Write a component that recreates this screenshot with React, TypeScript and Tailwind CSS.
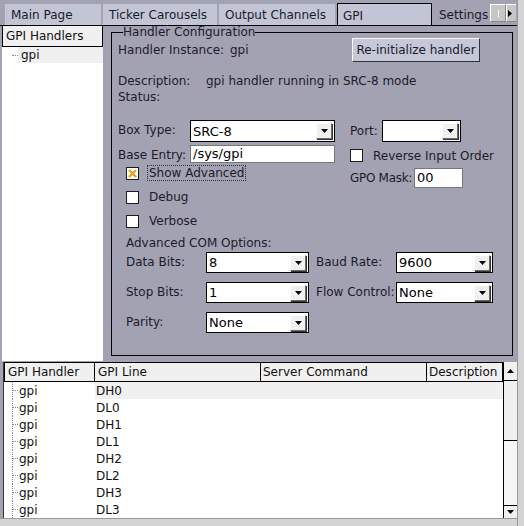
import React from "react";

const F = { fontFamily: '"DejaVu Sans", Verdana, sans-serif' };

function Arrow() {
  return (
    <svg width="7" height="4" viewBox="0 0 7 4">
      <path d="M0 0H7L3.5 4Z" fill="#000" />
    </svg>
  );
}

function Select({ value, w, h = 22 }: { value: string; w: string; h?: number }) {
  return (
    <div
      className={`${w} flex shrink-0 items-center justify-between border border-black bg-white`}
      style={{ height: h }}
    >
      <span className="pl-[2px] text-[13px] leading-none text-black">{value}</span>
      <div className="mr-[2px] flex h-[16px] w-[16px] items-center justify-center border border-t-white border-l-white border-r-[#6b6b6b] border-b-[#6b6b6b] bg-[#f0f0f0] shadow-[1px_1px_0_#333]">
        <Arrow />
      </div>
    </div>
  );
}

function Check({ checked }: { checked?: boolean }) {
  return (
    <div className="flex h-[13px] w-[13px] shrink-0 items-center justify-center border border-[#1c1c1c] bg-white">
      {checked && (
        <svg width="9" height="9" viewBox="0 0 9 9">
          <path d="M1 1L8 8M8 1L1 8" stroke="#e3a51b" strokeWidth="2.4" />
        </svg>
      )}
    </div>
  );
}

const tabs = ["Main Page", "Ticker Carousels", "Output Channels"];
const rows = ["DH0", "DL0", "DH1", "DL1", "DH2", "DL2", "DH3", "DL3"];

export default function App() {
  return (
    <div style={F} className="flex h-[526px] w-[524px] overflow-hidden bg-[#a3a2b2] text-[12px] text-[#1b1b2b]">
      <div className="flex w-[517px] flex-col">
        {/* tab strip */}
        <div className="flex h-[25px] items-end pl-[5px]">
          {tabs.map((t, i) => (
            <div
              key={t}
              className={`mr-[2px] flex h-[21px] items-center bg-[#c2c5d5] pl-[6px] ${
                i === 0 ? "w-[96px]" : i === 1 ? "w-[114px]" : "w-[116px]"
              }`}
            >
              {t}
            </div>
          ))}
          <div className="-mb-[1px] flex h-[23px] w-[95px] items-start border border-b-0 border-black bg-[#c2c5d5] pl-[5px] pt-[3px]">
            GPI
          </div>
          <div className="flex h-[21px] w-[58px] items-center pl-[7px]">Settings</div>
          <div className="mb-[3px] flex h-[18px] items-center">
            <div className="flex h-[18px] w-[16px] items-center justify-center border border-t-white border-l-white border-r-[#888] border-b-[#888] bg-[#c6c6c6]">
              <div className="h-[7px] w-[1px] bg-white" />
            </div>
            <div className="flex h-[18px] w-[10px] items-center justify-start border border-t-white border-l-white border-b-[#888] border-r-0 bg-[#c6c6c6] pl-[1px]">
              <svg width="4" height="7" viewBox="0 0 4 7">
                <path d="M0 0V7L4 3.5Z" fill="#000" />
              </svg>
            </div>
          </div>
        </div>

        {/* content */}
        <div className="flex h-[336px] border-t border-black">
          <div className="ml-[2px] w-[101px] bg-white">
            <div className="flex h-[21px] items-center border border-t-0 border-black bg-[#f0f0f0] pl-[3px] text-[12px] text-[#111]">
              GPI Handlers
            </div>
            <div className="flex h-[16px] items-center">
              <div className="ml-[10px] w-[6px] border-t border-dotted border-[#888]" />
              <div className="flex h-[16px] flex-1 items-center bg-[#f0f0f0] pl-[3px] text-[#111]">gpi</div>
            </div>
          </div>
          <div className="flex-1 pl-[8px] pr-[4px] pt-[0px]">
            <fieldset className="h-[330px] border border-black px-[6px]">
              <legend className="ml-[5px] px-0 text-[12px] leading-[12px]">Handler Configuration</legend>
              <div className="flex h-[24px] items-center justify-between">
                <div className="flex items-center">
                  <span className="w-[112px]">Handler Instance:</span>
                  <span>gpi</span>
                </div>
                <div className="mr-[26px] flex h-[24px] w-[128px] items-center justify-center border border-t-white border-l-white border-r-[#333] border-b-[#333] bg-[#c5c8d8] text-[12px]">
                  Re-initialize handler
                </div>
              </div>
              <div className="mt-[12px] flex h-[14px] items-center">
                <span className="w-[88px]">Description:</span>
                <span>gpi handler running in SRC-8 mode</span>
              </div>
              <div className="mt-[2px] flex h-[14px] items-center">Status:</div>

              <div className="mt-[16px] flex">
                <div className="w-[232px] shrink-0">
                  <div className="flex items-start">
                    <span className="mt-[1px] w-[72px]">Box Type:</span>
                    <Select value="SRC-8" w="w-[145px]" h={22} />
                  </div>
                  <div className="mt-[3px] flex items-start">
                    <span className="mt-[1px] w-[72px]">Base Entry:</span>
                    <div className="flex h-[18px] w-[145px] items-center border border-[#777] bg-white pl-[2px] text-[13px] text-black">
                      /sys/gpi
                    </div>
                  </div>
                  <div className="mt-[1px] flex h-[16px] items-center pl-[8px]">
                    <Check checked />
                    <span className="ml-[8px] border border-dotted border-[#333] px-[1px] leading-[14px]">Show Advanced</span>
                  </div>
                  <div className="mt-[8px] flex h-[16px] items-center pl-[8px]">
                    <Check />
                    <span className="ml-[10px]">Debug</span>
                  </div>
                  <div className="mt-[8px] flex h-[16px] items-center pl-[8px]">
                    <Check />
                    <span className="ml-[10px]">Verbose</span>
                  </div>
                </div>
                <div className="flex-1">
                  <div className="flex items-start">
                    <span className="mt-[2px] w-[32px]">Port:</span>
                    <Select value="" w="w-[79px]" h={22} />
                  </div>
                  <div className="mt-[6px] flex h-[15px] items-center">
                    <Check />
                    <span className="ml-[10px] whitespace-nowrap">Reverse Input Order</span>
                  </div>
                  <div className="mt-[5px] flex items-start">
                    <span className="mt-[1px] w-[64px] shrink-0 whitespace-nowrap tracking-[-0.3px]">GPO Mask:</span>
                    <div className="flex h-[20px] w-[49px] shrink-0 items-center border border-[#777] bg-white pl-[2px] text-[13px] text-black">
                      00
                    </div>
                  </div>
                </div>
              </div>

              <div className="mt-[5px] pl-[8px]">Advanced COM Options:</div>
              <div className="mt-[0px] flex flex-col gap-[9px] pl-[8px]">
                <div className="flex items-start">
                  <span className="mt-[1px] w-[80px]">Data Bits:</span>
                  <Select value="8" w="w-[103px]" h={21} />
                  <span className="ml-[7px] mt-[1px] w-[80px]">Baud Rate:</span>
                  <Select value="9600" w="w-[97px]" h={21} />
                </div>
                <div className="flex items-start">
                  <span className="mt-[1px] w-[80px]">Stop Bits:</span>
                  <Select value="1" w="w-[103px]" h={21} />
                  <span className="ml-[7px] mt-[1px] w-[80px]">Flow Control:</span>
                  <Select value="None" w="w-[97px]" h={21} />
                </div>
                <div className="flex items-start">
                  <span className="mt-[1px] w-[80px]">Parity:</span>
                  <Select value="None" w="w-[103px]" h={21} />
                </div>
              </div>
            </fieldset>
          </div>
        </div>

        {/* table */}
        <div className="flex flex-1 border-l border-[#333] bg-white ml-[3px] mt-[1px]">
          <div className="flex flex-1 flex-col">
            <div className="flex h-[20px] border border-black bg-[#f0f0f0] text-[#111]">
              <div className="flex w-[90px] items-center border-r border-black pl-[3px]">GPI Handler</div>
              <div className="flex w-[166px] items-center border-r border-black pl-[3px]">GPI Line</div>
              <div className="flex w-[166px] items-center border-r border-black pl-[2px]">Server Command</div>
              <div className="flex flex-1 items-center pl-[2px]">Description</div>
            </div>
            {rows.map((r, i) => (
              <div key={r} className="flex h-[17px] items-center text-[#111]">
                <div className="relative flex h-[17px] w-[91px] items-center pl-[15px]">
                  <div className="absolute left-[8px] top-0 h-[17px] border-l border-dotted border-[#888]" />
                  <div className="absolute left-[8px] top-[8px] w-[6px] border-t border-dotted border-[#888]" />
                  gpi
                </div>
                <div className={`flex h-[17px] flex-1 items-center pl-[1px] ${i === 0 ? "bg-[#f0f0f0]" : ""}`}>{r}</div>
              </div>
            ))}
          </div>
          <div className="flex w-[14px] flex-col border-l border-black">
            <div className="flex h-[19px] items-center justify-center border-b border-black bg-[#f0f0f0]">
              <svg width="7" height="4" viewBox="0 0 7 4"><path d="M0 4H7L3.5 0Z" fill="#000" /></svg>
            </div>
            <div className="h-[60px] border-b border-black bg-[#f0f0f0]" />
            <div className="flex-1 bg-[#f6f6f6]" />
            <div className="flex h-[13px] items-center justify-center border-t border-black bg-[#f0f0f0]">
              <Arrow />
            </div>
          </div>
        </div>
        <div className="h-[8px] border-t border-[#999] bg-[#d4d4d4]" />
      </div>
      <div className="w-[7px] border-l border-[#999] bg-[#d4d4d4]" />
    </div>
  );
}
